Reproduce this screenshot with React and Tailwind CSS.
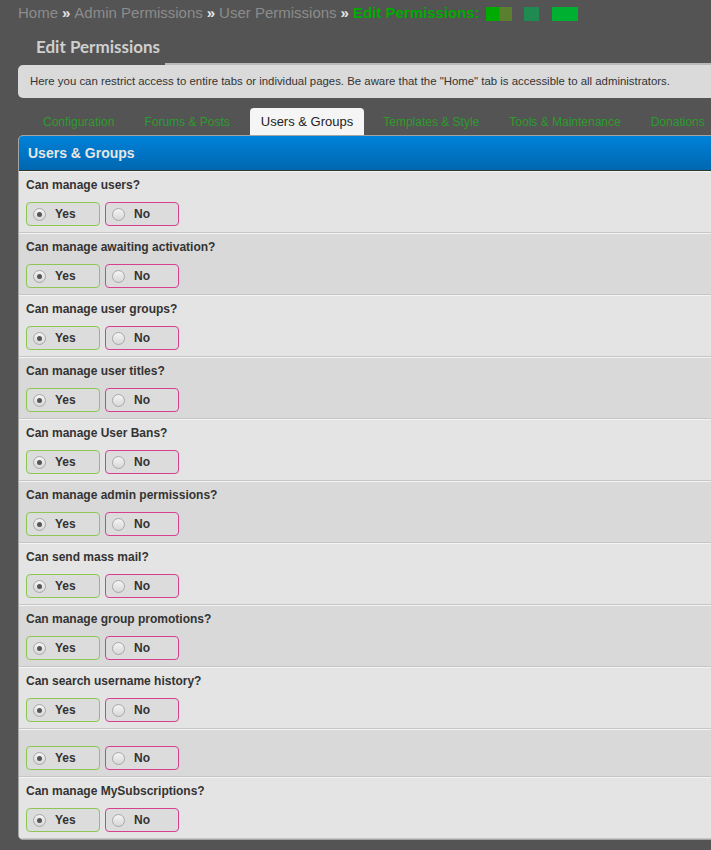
const perms = [
  'Can manage users?',
  'Can manage awaiting activation?',
  'Can manage user groups?',
  'Can manage user titles?',
  'Can manage User Bans?',
  'Can manage admin permissions?',
  'Can send mass mail?',
  'Can manage group promotions?',
  'Can search username history?',
  '',
  'Can manage MySubscriptions?',
];

const tabs = ['Configuration', 'Forums & Posts', 'Users & Groups', 'Templates & Style', 'Tools & Maintenance', 'Donations'];

function Radio({ checked }) {
  return (
    <span className="flex h-[13px] w-[13px] items-center justify-center rounded-full border border-[#a8a8a8] bg-gradient-to-b from-[#f4f4f4] to-[#d8d8d8]">
      {checked && <span className="h-[5px] w-[5px] rounded-full bg-[#555]" />}
    </span>
  );
}

function Choice({ label, checked, yes }) {
  return (
    <label className={`flex h-[24px] w-[74px] items-center gap-[9px] rounded-[4px] border bg-[#dcdcdc] pl-[6px] text-[12px] font-bold text-[#333] ${yes ? 'border-[#8dc653]' : 'border-[#d5408f]'}`}>
      <Radio checked={checked} />
      <span>{label}</span>
    </label>
  );
}

export default function App() {
  return (
    <div className="min-h-[850px] w-full overflow-hidden bg-[#545454] font-['Liberation_Sans',Arial,sans-serif]">
      <div className="flex h-[26px] items-center pl-[18px] pt-[1px] text-[15px] text-[#8c8c8c]">
        <span>Home</span>
        <span className="mx-[4px] font-bold text-[#e6e6e6]">»</span>
        <span>Admin Permissions</span>
        <span className="mx-[4px] font-bold text-[#e6e6e6]">»</span>
        <span>User Permissions</span>
        <span className="mx-[4px] font-bold text-[#e6e6e6]">»</span>
        <span className="font-bold text-[#00aa00]">Edit Permissions:</span>
        <span className="ml-[6px] flex h-[14px] w-[26px]">
          <span className="h-full w-1/2 bg-[#00aa00]" />
          <span className="h-full w-1/2 bg-[#5b7f2f]" />
        </span>
        <span className="ml-[12px] h-[14px] w-[15px] bg-[#1f8b50]" />
        <span className="ml-[13px] h-[14px] w-[26px] bg-[#00b030]" />
      </div>

      <div className="pl-[36px] pt-[9px] font-['Lato',sans-serif] text-[17px] font-bold leading-[24px] text-[#cfcfcf]">
        Edit Permissions
      </div>

      <div className="ml-[18px] mt-[4px] w-[720px]">
        <div className="flex h-[2px]">
          <div className="w-[147px]" />
          <div className="flex-1 bg-[#b9b9b9]" />
        </div>
        <div className="flex h-[33px] items-center rounded-b-[5px] rounded-tl-[5px] bg-[#dadada] pl-[12px] text-[11.4px] text-[#333]">
          Here you can restrict access to entire tabs or individual pages. Be aware that the "Home" tab is accessible to all administrators.
        </div>
      </div>

      <div className="ml-[28px] mt-[10px] flex h-[27px] items-end whitespace-nowrap">
        {tabs.map((t) =>
          t === 'Users & Groups' ? (
            <div key={t} className="ml-[5px] mr-[4px] flex h-[27px] items-center rounded-t-[4px] bg-[#f5f5f5] px-[11px] text-[13px] text-[#222]">
              {t}
            </div>
          ) : (
            <div key={t} className="flex h-[27px] items-center px-[15px] text-[12px] text-[#2c9c2c]">
              {t}
            </div>
          )
        )}
      </div>

      <div className="ml-[18px] w-[720px] overflow-hidden rounded-l-[5px] border border-[#a4a4a4] bg-[#e4e4e4]">
        <div className="flex h-[35px] items-center border-b border-[#2c3a29] bg-gradient-to-b from-[#0082da] to-[#0067b0] pl-[9px] text-[14px] font-bold text-[#e6e6e6]">
          Users & Groups
        </div>
        {perms.map((p, i) => (
          <div
            key={i}
            className={`border-t border-b border-t-[#f3f3f3] border-b-[#c6c6c6] px-[7px] ${i % 2 ? 'bg-[#d9d9d9]' : 'bg-[#e4e4e4]'} ${p ? 'pt-[6px] pb-[6px]' : 'pt-[16px] pb-[6px]'}`}
          >
            {p && <div className="h-[15px] text-[12px] font-bold leading-[15px] text-[#333]">{p}</div>}
            <div className={`flex gap-[5px] ${p ? 'mt-[9px]' : ''}`}>
              <Choice label="Yes" checked yes />
              <Choice label="No" />
            </div>
          </div>
        ))}
      </div>
    </div>
  );
}
